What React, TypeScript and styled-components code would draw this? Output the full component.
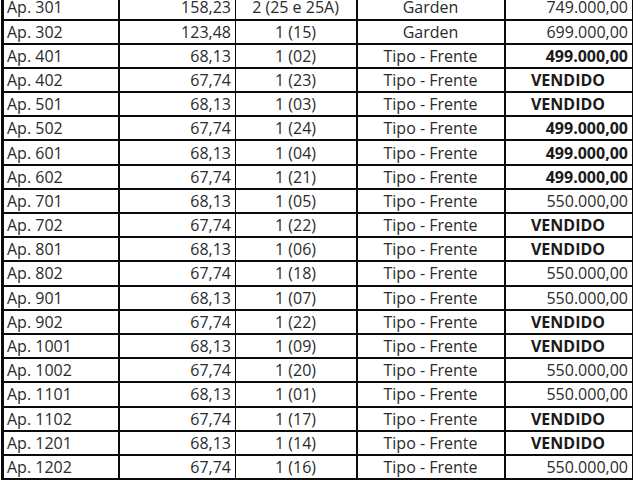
import React from "react";
import styled, { createGlobalStyle } from "styled-components";

const GlobalStyle = createGlobalStyle`
  html, body {
    margin: 0;
    padding: 0;
    background: #ffffff;
    overflow: hidden;
  }
  body {
    font-family: "Open Sans", "Liberation Sans", sans-serif;
  }
`;

type Align = "left" | "right" | "center";

interface ColDef {
  width: number;
  align: Align;
  border: number;
}

const COLS: ColDef[] = [
  { width: 116, align: "left", border: 2.5 },
  { width: 116, align: "right", border: 1.5 },
  { width: 122, align: "center", border: 2.5 },
  { width: 148, align: "center", border: 2.5 },
  { width: 127, align: "right", border: 1.5 },
];

type Price = { text: string; bold?: boolean; sold?: boolean };

interface RowData {
  unit: string;
  area: string;
  spots: string;
  kind: string;
  price: Price;
}

const SOLD: Price = { text: "VENDIDO", bold: true, sold: true };
const P550: Price = { text: "550.000,00" };
const P499: Price = { text: "499.000,00", bold: true };

const ROWS: RowData[] = [
  { unit: "Ap. 301", area: "158,23", spots: "2 (25 e 25A)", kind: "Garden", price: { text: "749.000,00" } },
  { unit: "Ap. 302", area: "123,48", spots: "1 (15)", kind: "Garden", price: { text: "699.000,00" } },
  { unit: "Ap. 401", area: "68,13", spots: "1 (02)", kind: "Tipo - Frente", price: P499 },
  { unit: "Ap. 402", area: "67,74", spots: "1 (23)", kind: "Tipo - Frente", price: SOLD },
  { unit: "Ap. 501", area: "68,13", spots: "1 (03)", kind: "Tipo - Frente", price: SOLD },
  { unit: "Ap. 502", area: "67,74", spots: "1 (24)", kind: "Tipo - Frente", price: P499 },
  { unit: "Ap. 601", area: "68,13", spots: "1 (04)", kind: "Tipo - Frente", price: P499 },
  { unit: "Ap. 602", area: "67,74", spots: "1 (21)", kind: "Tipo - Frente", price: P499 },
  { unit: "Ap. 701", area: "68,13", spots: "1 (05)", kind: "Tipo - Frente", price: P550 },
  { unit: "Ap. 702", area: "67,74", spots: "1 (22)", kind: "Tipo - Frente", price: SOLD },
  { unit: "Ap. 801", area: "68,13", spots: "1 (06)", kind: "Tipo - Frente", price: SOLD },
  { unit: "Ap. 802", area: "67,74", spots: "1 (18)", kind: "Tipo - Frente", price: P550 },
  { unit: "Ap. 901", area: "68,13", spots: "1 (07)", kind: "Tipo - Frente", price: P550 },
  { unit: "Ap. 902", area: "67,74", spots: "1 (22)", kind: "Tipo - Frente", price: SOLD },
  { unit: "Ap. 1001", area: "68,13", spots: "1 (09)", kind: "Tipo - Frente", price: SOLD },
  { unit: "Ap. 1002", area: "67,74", spots: "1 (20)", kind: "Tipo - Frente", price: P550 },
  { unit: "Ap. 1101", area: "68,13", spots: "1 (01)", kind: "Tipo - Frente", price: P550 },
  { unit: "Ap. 1102", area: "67,74", spots: "1 (17)", kind: "Tipo - Frente", price: SOLD },
  { unit: "Ap. 1201", area: "68,13", spots: "1 (14)", kind: "Tipo - Frente", price: SOLD },
  { unit: "Ap. 1202", area: "67,74", spots: "1 (16)", kind: "Tipo - Frente", price: P550 },
];

const Sheet = styled.div`
  margin: -3.7px 0 0 1px;
  width: 632px;
`;

const Table = styled.div`
  display: grid;
  grid-template-columns: ${COLS.map((c) => `${c.width}px`).join(" ")};
  grid-auto-rows: 24.2px;
  border-left: 3px solid #0c0c0c;
  background: #ffffff;
`;

const Cell = styled.div<{ $align: Align; $border: number; $bold?: boolean; $sold?: boolean }>`
  box-sizing: border-box;
  display: flex;
  align-items: center;
  justify-content: ${(p) =>
    p.$sold ? "center" : p.$align === "left" ? "flex-start" : p.$align === "right" ? "flex-end" : "center"};
  padding: ${(p) => (p.$sold ? "0 2px 0 0" : "0 4px 0 3px")};
  border-right: ${(p) => p.$border}px solid #0c0c0c;
  border-bottom: 2px solid #0c0c0c;
  font-size: 16px;
  line-height: 1;
  font-weight: ${(p) => (p.$bold ? 700 : 400)};
  color: ${(p) => (p.$bold ? "#1a1a1a" : "#2b2b2b")};
  white-space: nowrap;
  overflow: hidden;
`;

export default function App() {
  return (
    <>
      <GlobalStyle />
      <Sheet>
        <Table>
          {ROWS.map((r) => {
            const values = [r.unit, r.area, r.spots, r.kind];
            return (
              <React.Fragment key={r.unit}>
                {values.map((v, i) => (
                  <Cell key={i} $align={COLS[i].align} $border={COLS[i].border}>
                    {v}
                  </Cell>
                ))}
                <Cell
                  $align={COLS[4].align}
                  $border={COLS[4].border}
                  $bold={r.price.bold}
                  $sold={r.price.sold}
                >
                  {r.price.text}
                </Cell>
              </React.Fragment>
            );
          })}
        </Table>
      </Sheet>
    </>
  );
}
